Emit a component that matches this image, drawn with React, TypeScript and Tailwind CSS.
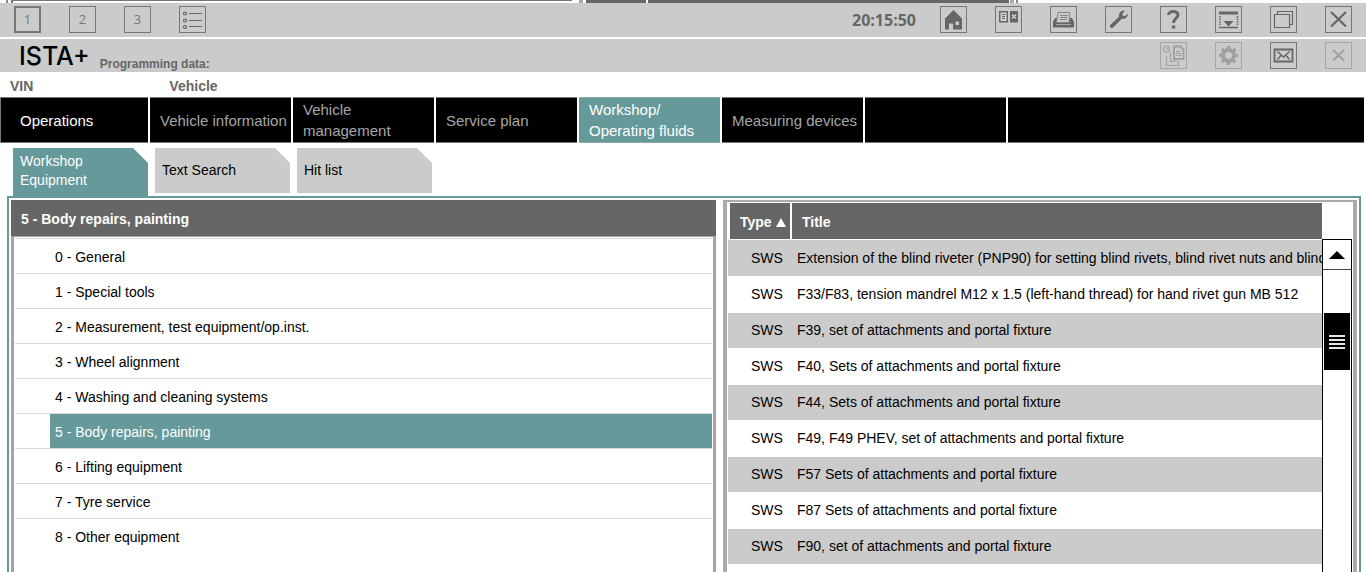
import type { ReactNode } from "react";

type IconButtonProps = {
  label: string;
  children: ReactNode;
  disabled?: boolean;
  heavy?: boolean;
};

function IconButton({ label, children, disabled, heavy }: IconButtonProps) {
  const tone = disabled
    ? "border-[#a6a6a6] text-[#a0a0a0]"
    : "border-[#777777] text-[#666666]";
  return (
    <button
      type="button"
      aria-label={label}
      disabled={disabled}
      className={`flex size-[27px] shrink-0 items-center justify-center ${heavy ? "border-2" : "border"} ${tone}`}
    >
      {children}
    </button>
  );
}

function Digit({ children }: { children: string }) {
  return (
    <span className="font-['Open_Sans',sans-serif] text-[13px] leading-none text-[#777777]">
      {children}
    </span>
  );
}

const svgProps = { width: 25, height: 25, viewBox: "0 0 25 25", fill: "none", stroke: "currentColor" };

const ListIcon = () => (
  <svg {...svgProps} strokeWidth="1.2">
    <circle cx="5" cy="6.500" r="1.5" />
    <circle cx="5" cy="13.500" r="1.5" />
    <circle cx="5" cy="20" r="1.5" />
    <path d="M9 6.500H22M9 13.500H22M9 19.500H22" strokeWidth="1" />
  </svg>
);

const HomeIcon = () => (
  <svg {...svgProps} stroke="none" fill="currentColor">
    <path fillRule="evenodd" d="M12.500 3L21 11.500V22.500H12V16.500H8V22.500H4V11.500ZM14.500 14.500V18H18V14.500Z" />
  </svg>
);

const BookIcon = () => (
  <svg {...svgProps} stroke="none">
    <path fill="currentColor" d="M3 4H12V15.500H3ZM14 4H22V15.500H14Z" />
    <path fill="#d4d4d4" d="M4.500 5.500H10.500V14H4.500Z" />
    <path stroke="currentColor" d="M6 7.500H9M6 9.500H9M6 11.500H9" />
    <path stroke="#d4d4d4" strokeWidth="1.300" d="M16 7.500L20 11.500M20 7.500L16 11.500" />
  </svg>
);

const PrinterIcon = () => (
  <svg {...svgProps} stroke="none">
    <path fill="currentColor" d="M2 15L4 11H21L23 15V20.500H2Z" />
    <path fill="#cbcbcb" stroke="#858585" d="M7 5.500H19L18 15.500H5.500Z" />
    <path stroke="#858585" d="M9 8.500H17M9 10.500H16.500M9 12.500H16" />
    <path stroke="#a8a8a8" d="M5 17.500H20" />
  </svg>
);

const WrenchIcon = () => (
  <svg {...svgProps} stroke="none" fill="currentColor">
    <path d="M18.800 3.500L16.300 7L17 8.800L19 9.300L21.800 6.500C22 10 19.500 12.500 15.800 11.800L7 20.500C5.500 22 2.800 20 4.300 18.100L13 9.800C12.300 6 15.300 3 18.800 3.500Z" />
  </svg>
);

const HelpIcon = () => (
  <svg {...svgProps} strokeWidth="3">
    <path d="M7.500 8C7.500 3.500 17 3.500 17 7.800C17 11.500 12.500 11.500 12.500 16" />
    <path d="M12.500 18.500V21.500" strokeWidth="3.400" />
  </svg>
);

const DockIcon = () => (
  <svg {...svgProps}>
    <path strokeWidth="3" d="M3 6H22" />
    <path strokeWidth="1.500" strokeDasharray="1.5 1" d="M4 9V19M21.500 9V19" />
    <path fill="currentColor" stroke="none" d="M7.500 14H17.500L12.500 19.500Z" />
    <path strokeWidth="1.500" d="M3 20.500H22" />
  </svg>
);

const WindowsIcon = () => (
  <svg {...svgProps} strokeWidth="1.200">
    <path d="M3.500 7.500H18.500V20.500H3.500Z" />
    <path d="M6.500 7V4.500H21.500V17.500H19" />
  </svg>
);

const CloseIcon = () => (
  <svg {...svgProps} strokeWidth="2.200">
    <path d="M5 5L20 19.500M20 5L5 19.500" />
  </svg>
);

const SmallCloseIcon = () => (
  <svg {...svgProps} strokeWidth="2">
    <path d="M7 7L18 17.500M18 7L7 17.500" />
  </svg>
);

const HistoryIcon = () => (
  <svg {...svgProps} strokeWidth="1.100">
    <circle cx="5.500" cy="6" r="3" />
    <path d="M5.500 6.500L7 4.500M9.500 10V18.500H13.500V15M5.500 13.500V22.500H17.500V18.500H15.500" />
    <path strokeWidth="1.800" d="M13 3.500H19.500L22.500 6.500V16H13Z" />
    <path d="M15 8.500H19M15 10.500H20.500M15 12.500H20.500" />
  </svg>
);

const GearIcon = () => (
  <svg {...svgProps}>
    <circle cx="12.500" cy="12.500" r="5.500" strokeWidth="4" />
    <circle cx="12.500" cy="12.500" r="8.200" strokeWidth="2.600" strokeDasharray="3.220 3.220" strokeDashoffset="1.610" />
  </svg>
);

const MailIcon = () => (
  <svg {...svgProps}>
    <path strokeWidth="1.800" d="M3.500 6.500H21.500V18.500H3.500Z" />
    <path strokeWidth="1.300" d="M6.500 8.500L12.500 14L18.500 8.500M6.500 16.500L10 12.500M18.500 16.500L15 12.500" />
  </svg>
);

const navItems = [
  "Operations",
  "Vehicle information",
  "Vehicle management",
  "Service plan",
  "Workshop/ Operating fluids",
  "Measuring devices",
  "",
];

const categories = [
  "0 - General",
  "1 - Special tools",
  "2 - Measurement, test equipment/op.inst.",
  "3 - Wheel alignment",
  "4 - Washing and cleaning systems",
  "5 - Body repairs, painting",
  "6 - Lifting equipment",
  "7 - Tyre service",
  "8 - Other equipment",
];

const documents = [
  "Extension of the blind riveter (PNP90) for setting blind rivets, blind rivet nuts and blind",
  "F33/F83, tension mandrel M12 x 1.5 (left-hand thread) for hand rivet gun MB 512",
  "F39, set of attachments and portal fixture",
  "F40, Sets of attachments and portal fixture",
  "F44, Sets of attachments and portal fixture",
  "F49, F49 PHEV, set of attachments and portal fixture",
  "F57 Sets of attachments and portal fixture",
  "F87 Sets of attachments and portal fixture",
  "F90, set of attachments and portal fixture",
];

function WindowEdge() {
  return (
    <div aria-hidden="true" className="flex h-[3px] shrink-0 bg-white">
      <div className="ml-[6px] w-[2px] bg-[#669999]" />
      <div className="ml-[3px] w-[561px] border-t border-l-2 border-[#77747c]" />
      <div className="ml-[7px] w-[4px] bg-[#aaaaaa]" />
      <div className="ml-[3px] w-[60px] bg-[#666666]" />
      <div className="ml-[2px] w-[361px] bg-[#666666]" />
      <div className="ml-[1px] w-[4px] bg-[#aaaaaa]" />
      <div className="ml-[2px] w-[2px] bg-[#669999]" />
    </div>
  );
}

function Toolbars() {
  return (
    <header>
      <div className="flex h-[34px] items-center justify-between bg-[#cbcbcb] px-[14px] pb-px">
        <div className="flex gap-7">
          <IconButton label="Session 1" heavy><Digit>1</Digit></IconButton>
          <IconButton label="Session 2"><Digit>2</Digit></IconButton>
          <IconButton label="Session 3"><Digit>3</Digit></IconButton>
          <IconButton label="Session list"><ListIcon /></IconButton>
        </div>
        <div className="flex items-center gap-7">
          <time className="-mr-1 font-['Open_Sans',sans-serif] text-[16px] leading-none font-bold text-[#666666]">
            20:15:50
          </time>
          <IconButton label="Home"><HomeIcon /></IconButton>
          <IconButton label="Manual"><BookIcon /></IconButton>
          <IconButton label="Print"><PrinterIcon /></IconButton>
          <IconButton label="Settings"><WrenchIcon /></IconButton>
          <IconButton label="Help"><HelpIcon /></IconButton>
          <IconButton label="Minimise"><DockIcon /></IconButton>
          <IconButton label="Switch window"><WindowsIcon /></IconButton>
          <IconButton label="Close"><CloseIcon /></IconButton>
        </div>
      </div>
      <div className="mt-[2px] flex h-[33px] items-center justify-between bg-[#cbcbcb] pr-[14px] pl-[19px]">
        <div className="flex items-end gap-[10px]">
          <h1 className="font-['Inter',sans-serif] text-[25px] leading-[30px] font-medium text-black">ISTA+</h1>
          <span className="text-[12px] leading-[14px] font-bold text-[#666666]">Programming data:</span>
        </div>
        <div className="flex gap-7">
          <IconButton label="Operation history" disabled><HistoryIcon /></IconButton>
          <IconButton label="Configuration" disabled><GearIcon /></IconButton>
          <IconButton label="Feedback"><MailIcon /></IconButton>
          <IconButton label="End operation" disabled><SmallCloseIcon /></IconButton>
        </div>
      </div>
    </header>
  );
}

function MainNav() {
  return (
    <nav className="flex h-[46px] gap-[2px] pr-[2px] text-[15px] leading-[21px]">
      {navItems.map((item, i) => {
        const active = i === 4;
        const tone = active
          ? "border-[#88aaaa] bg-[#669999] text-white"
          : i === 0
            ? "border-[#777777] bg-black text-white"
            : "border-[#777777] bg-black text-[#a6a6a6]";
        return (
          <a
            key={i}
            href="#"
            aria-current={active ? "page" : undefined}
            className={`flex shrink-0 items-center border-y ${i === 0 ? "w-[148px] border-l pl-[19px]" : "w-[141px] pl-[10px]"} ${tone}`}
          >
            {item}
          </a>
        );
      })}
      <div className="flex-1 border-y border-[#777777] bg-black" />
    </nav>
  );
}

function SubTab({ label, active }: { label: string; active?: boolean }) {
  return (
    <a
      href="#"
      className={`flex w-[135px] items-center pl-[7px] [clip-path:polygon(0_0,calc(100%_-_15px)_0,100%_15px,100%_100%,0_100%)] ${
        active ? "h-12 bg-[#669999] pr-12 pb-[2px] text-white" : "h-[45px] bg-[#cbcbcb] text-black"
      }`}
    >
      {label}
    </a>
  );
}

function CategoryPanel() {
  return (
    <section className="flex w-[705px] shrink-0 flex-col">
      <h2 className="flex h-9 items-center bg-[#666666] pt-[2px] pl-[10px] font-bold text-white">
        5 - Body repairs, painting
      </h2>
      <div className="flex-1 border-x-[3px] border-t border-[#a3a3a8] px-px pt-px">
        <ul>
          {categories.map((name, i) => (
            <li key={name} className="border-t border-[#d8d8d8] pl-[35px]">
              <button
                type="button"
                className={`flex h-[34px] w-full items-center pt-[2px] pl-[5px] text-left ${i === 5 ? "bg-[#669999] text-white" : ""}`}
              >
                {name}
              </button>
            </li>
          ))}
        </ul>
      </div>
    </section>
  );
}

function ScrollBar() {
  return (
    <div className="mt-[37px] flex w-[30px] shrink-0 flex-col border-x border-t border-black bg-white">
      <button
        type="button"
        aria-label="Scroll up"
        className="flex h-[30px] items-center justify-center border-b border-[#444444]"
      >
        <svg width="16" height="8" viewBox="0 0 16 8"><path d="M8 0L16 8H0Z" /></svg>
      </button>
      <button
        type="button"
        aria-label="Scroll position"
        className="mx-px mt-[43px] flex h-[57px] flex-col items-center justify-center gap-[2px] bg-black"
      >
        {[0, 1, 2, 3].map((n) => (
          <span key={n} className="h-[2px] w-4 bg-[#e4e4e4]" />
        ))}
      </button>
    </div>
  );
}

function DocumentPanel() {
  return (
    <section className="flex min-w-0 flex-1 border-x-4 border-t-2 border-[#aaaaaa] pr-px pl-px">
      <div className="min-w-0 flex-1 overflow-hidden">
        <table className="w-full table-fixed border-collapse">
          <thead>
            <tr className="h-[38px] text-left font-bold">
              <th className="w-[62px] p-0">
                <div className="ml-[2px] flex h-9 items-center gap-1 bg-[#666666] pt-[2px] pl-[10px] text-white">
                  Type
                  <svg width="10" height="9" viewBox="0 0 10 9" fill="currentColor"><path d="M5 0L10 9H0Z" /></svg>
                </div>
              </th>
              <th className="p-0">
                <div className="ml-[2px] flex h-9 items-center bg-[#666666] pt-[2px] pl-[10px] text-white">Title</div>
              </th>
            </tr>
          </thead>
          <tbody>
            {documents.map((title, i) => (
              <tr key={title} className={`h-9 border-b border-white ${i % 2 === 0 ? "bg-[#cbcbcb]" : "bg-white"}`}>
                <td className="p-0 pl-[23px]">SWS</td>
                <td className="overflow-hidden p-0 pl-[7px] whitespace-nowrap">{title}</td>
              </tr>
            ))}
          </tbody>
        </table>
      </div>
      <ScrollBar />
    </section>
  );
}

export default function App() {
  return (
    <div className="flex min-h-screen flex-col bg-white font-['Liberation_Sans',Arial,sans-serif] text-[14px] leading-5 text-black">
      <WindowEdge />
      <Toolbars />
      <div className="flex h-[25px] items-center gap-[136px] pt-[3px] pl-[10px] font-bold text-[#666666]">
        <span>VIN</span>
        <span>Vehicle</span>
      </div>
      <MainNav />
      <nav className="mt-[5px] flex h-12 gap-[7px] pl-[13px] leading-[19px]">
        <SubTab label="Workshop Equipment" active />
        <SubTab label="Text Search" />
        <SubTab label="Hit list" />
      </nav>
      <main className="mr-[5px] ml-[7px] flex flex-1 gap-[7px] border-x-2 border-t-2 border-[#669999] px-[2px] pt-[2px]">
        <CategoryPanel />
        <DocumentPanel />
      </main>
    </div>
  );
}
